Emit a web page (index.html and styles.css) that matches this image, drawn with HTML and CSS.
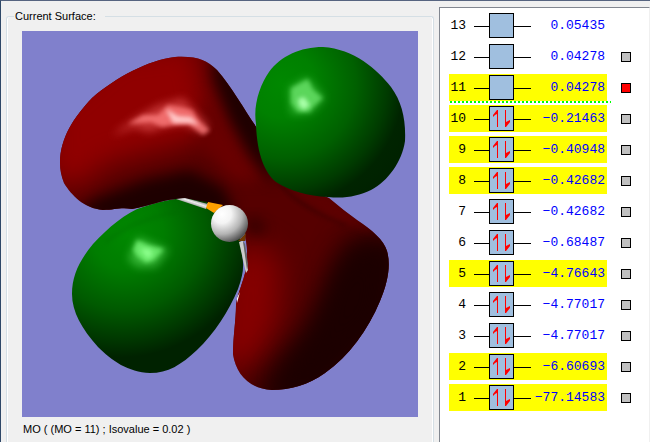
FILE: index.html
```html
<!DOCTYPE html>
<html lang="en">
<head>
<meta charset="utf-8">
<title>Molecular orbitals</title>
<link rel="stylesheet" href="styles.css">
</head>
<body>
<main class="window">
  <fieldset class="surface">
    <legend>Current Surface:</legend>
    <svg class="view" viewBox="22 31 396 386" role="img" aria-label="Orbital surface">
      <defs>
        <radialGradient id="g1" gradientUnits="userSpaceOnUse" cx="282" cy="84" r="135">
          <stop offset="0" stop-color="#008800"/><stop offset=".25" stop-color="#008000"/><stop offset=".55" stop-color="#006000"/><stop offset=".78" stop-color="#003b00"/><stop offset=".9" stop-color="#002400"/><stop offset="1" stop-color="#002200"/>
        </radialGradient>
        <radialGradient id="g2" gradientUnits="userSpaceOnUse" cx="128" cy="235" r="145" gradientTransform="rotate(-25 128 235) scale(1 .93) translate(0 17)">
          <stop offset="0" stop-color="#008800"/><stop offset=".25" stop-color="#007d00"/><stop offset=".55" stop-color="#005a00"/><stop offset=".78" stop-color="#003600"/><stop offset=".9" stop-color="#002200"/>
        </radialGradient>
        <radialGradient id="ball" gradientUnits="userSpaceOnUse" cx="222" cy="214" r="31">
          <stop offset="0" stop-color="#fff"/><stop offset=".3" stop-color="#f4f4f4"/><stop offset=".65" stop-color="#b4b4b4"/><stop offset="1" stop-color="#444"/>
        </radialGradient>
        <linearGradient id="bond" gradientUnits="userSpaceOnUse" x1="193" y1="198" x2="190" y2="207">
          <stop offset="0" stop-color="#777"/><stop offset=".4" stop-color="#eee"/><stop offset="1" stop-color="#555"/>
        </linearGradient>
        <path id="red" d="M60 163C60 138 74 117 92 98C116 77 149 60 175 57C198 56 206 60 217 70C232 87 245 111 257 128L282 178L329 198Q343 210 357 220C372 230 384 240 387 251C391 265 388 282 380 301C368 330 349 356 325 373C308 385 290 390 272 390C249 389 236 374 233 354C233 337 236 320 236 305C238 292 243 283 246 269C248 255 246 241 244 230L228 209L204 202L190 199L176 199C162 200 149 206 132 209C120 207 115 210 103 210C84 208 72 196 64 183Q60 173 60 163Z"/>
        <clipPath id="redClip"><use href="#red"/></clipPath>
        <filter id="b16" x="-60%" y="-60%" width="220%" height="220%" color-interpolation-filters="sRGB"><feGaussianBlur stdDeviation="14"/></filter>
        <filter id="b8" x="-60%" y="-60%" width="220%" height="220%" color-interpolation-filters="sRGB"><feGaussianBlur stdDeviation="7"/></filter>
        <filter id="b3" x="-60%" y="-60%" width="220%" height="220%" color-interpolation-filters="sRGB"><feGaussianBlur stdDeviation="4"/></filter>
        <filter id="b2" x="-60%" y="-60%" width="220%" height="220%" color-interpolation-filters="sRGB"><feGaussianBlur stdDeviation="2"/></filter>
      </defs>
      <rect x="22" y="31" width="396" height="386" fill="#8080cc"/>
      <path fill="url(#g2)" d="M72 294C72 276 79 261 93 244C108 228 126 212 143 207C158 202 173 198 190 198L238 220L243 262Q244 273 238 289C229 311 214 334 197 350C181 365 168 373 150 373C128 372 112 361 98 347C82 329 72 312 72 294Z"/>
      <path d="M105 243Q127 222 177 212" fill="none" stroke="#006300" stroke-width="3" opacity=".3" filter="url(#b2)"/>
      <path filter="url(#b3)" fill="#80ff80" opacity=".4" d="M128 259L138 237L169 250L156 267L137 267Z"/>
      <path filter="url(#b2)" fill="#80ff80" opacity=".7" d="M133 250L137 240L148 245L164 249L154 260L146 263L137 256Z"/>
      <path filter="url(#b2)" fill="#8cff8c" d="M140 249L149 249L153 253L148 259Z"/>
      <use href="#red" fill="#560000"/>
      <g clip-path="url(#redClip)">
        <path filter="url(#b16)" fill="#900000" d="M45 185L50 105L115 50L196 40L208 100L218 128L180 145L105 165L85 185Z"/>
        <path filter="url(#b8)" fill="#690000" d="M203 95L225 112L262 180L232 180L200 145Z"/>
        <path filter="url(#b8)" fill="#1e0000" d="M214 53L240 84L262 118L275 186L250 154L230 119L213 76Z"/>
        <path filter="url(#b8)" fill="#1e0000" d="M72 217L94 199L145 180L190 170L223 187L236 212L150 220Z"/>
        <path filter="url(#b16)" fill="#850000" d="M225 270L250 240L280 260L278 320L257 362L215 370Z"/>
        <path filter="url(#b16)" fill="#1c0000" d="M350 235L410 235L395 330L320 405L250 410L262 380L305 330L325 290Z"/>
        <path filter="url(#b16)" fill="#1c0000" d="M340 260L385 245L375 320L310 380L275 385L320 325Z"/>
        <path filter="url(#b8)" fill="#210000" d="M246 219L258 218L268 231L257 235L247 230Z" opacity=".7"/>
        <path filter="url(#b2)" fill="none" stroke="#250000" stroke-width="2" opacity=".6" d="M278 182Q299 207 346 225"/>
        <path filter="url(#b3)" fill="#620000" opacity=".7" d="M287 186L329 198L375 232L331 217Z"/>
        <path filter="url(#b3)" fill="#e05050" opacity=".65" d="M111 136L135 118L158 105L183 98L209 126L202 133L183 124L164 127L149 132L134 127Z"/>
        <path filter="url(#b2)" fill="#ff8080" opacity=".75" d="M128 124L143 115L158 115L168 105L184 108L192 110L199 121L210 130L203 135L189 124L174 125L162 127L151 122Z"/>
        <path filter="url(#b2)" fill="#ffc8c8" d="M166 109L178 116L191 117L199 125L189 123L173 123Z"/>
      </g>
      <path fill="url(#g1)" d="M256 124C253 105 260 85 269 72C281 56 300 47 323 47C354 49 377 69 391 87C402 102 406 120 405 141C402 162 388 181 371 190C358 196 345 199 328 197C308 196 290 191 276 182C265 173 257 155 256 124Z"/>
      <path filter="url(#b3)" fill="#80ff80" opacity=".35" d="M289 88L307 77L325 98L311 113L291 114Z"/>
      <path filter="url(#b2)" fill="#70e870" opacity=".7" d="M291 88L308 79L313 90L323 98L313 107L310 112L298 112L291 103Z"/>
      <path filter="url(#b2)" fill="#a8ffa8" d="M298 99L304 97L310 105L304 110L299 106Z"/>
      <path fill="#004000" d="M188 199L207 202L207 206Z"/>
      <path fill="url(#bond)" d="M176 199L185 198L208 204L206 209Z"/>
      <path fill="#ffa000" d="M208 202L223 205L214 213L206 208Z"/>
      <path fill="#8080cc" d="M243 240L246 241L247 252L245 257Z"/>
      <path fill="#ccc" d="M239 242L243 241L248 270L246 273Z"/>
      <path fill="#666" d="M243 241L245 244L248 264L247 270Z"/>
      <path fill="#fff" d="M240 292L237 303L237 298Z"/>
      <path fill="#703800" d="M238 241L246 233L245 241Z"/>
      <circle cx="229.500" cy="223.500" r="18.500" fill="url(#ball)"/>
    </svg>
    <p class="caption">MO ( (MO = 11) ; Isovalue = 0.02 )</p>
  </fieldset>

  <section class="levels" aria-label="Orbital energies">
    <svg class="symbols" aria-hidden="true">
      <symbol id="empty" viewBox="0 0 57 25">
        <path d="M0 13.500H57" stroke="#000"/>
        <rect x="15.500" y=".5" width="24" height="24" fill="#a0bfdf" stroke="#000"/>
      </symbol>
      <symbol id="pair" viewBox="0 0 57 25">
        <path d="M0 13.500H57" stroke="#000"/>
        <rect x="15.500" y=".5" width="24" height="24" fill="#a0bfdf" stroke="#000"/>
        <path d="M23 4H24V21H23V8L21 9L19 11V9ZM31 4H32V16L34 15L36 14V16L32 21H31Z" fill="#f00"/>
      </symbol>
    </svg>
    <table>
      <tbody>
        <tr><th scope="row">13</th><td class="level"><svg><use href="#empty"/></svg></td><td class="energy">0.05435</td><td class="pick"></td></tr>
        <tr><th scope="row">12</th><td class="level"><svg><use href="#empty"/></svg></td><td class="energy">0.04278</td><td class="pick"><input type="checkbox" aria-label="Orbital 12"></td></tr>
        <tr class="marked lumo"><th scope="row">11</th><td class="level"><svg><use href="#empty"/></svg></td><td class="energy">0.04278</td><td class="pick"><input type="checkbox" aria-label="Orbital 11" checked></td></tr>
        <tr class="marked"><th scope="row">10</th><td class="level"><svg><use href="#pair"/></svg></td><td class="energy">−0.21463</td><td class="pick"><input type="checkbox" aria-label="Orbital 10"></td></tr>
        <tr class="marked"><th scope="row">9</th><td class="level"><svg><use href="#pair"/></svg></td><td class="energy">−0.40948</td><td class="pick"><input type="checkbox" aria-label="Orbital 9"></td></tr>
        <tr class="marked"><th scope="row">8</th><td class="level"><svg><use href="#pair"/></svg></td><td class="energy">−0.42682</td><td class="pick"><input type="checkbox" aria-label="Orbital 8"></td></tr>
        <tr><th scope="row">7</th><td class="level"><svg><use href="#pair"/></svg></td><td class="energy">−0.42682</td><td class="pick"><input type="checkbox" aria-label="Orbital 7"></td></tr>
        <tr><th scope="row">6</th><td class="level"><svg><use href="#pair"/></svg></td><td class="energy">−0.68487</td><td class="pick"><input type="checkbox" aria-label="Orbital 6"></td></tr>
        <tr class="marked"><th scope="row">5</th><td class="level"><svg><use href="#pair"/></svg></td><td class="energy">−4.76643</td><td class="pick"><input type="checkbox" aria-label="Orbital 5"></td></tr>
        <tr><th scope="row">4</th><td class="level"><svg><use href="#pair"/></svg></td><td class="energy">−4.77017</td><td class="pick"><input type="checkbox" aria-label="Orbital 4"></td></tr>
        <tr><th scope="row">3</th><td class="level"><svg><use href="#pair"/></svg></td><td class="energy">−4.77017</td><td class="pick"><input type="checkbox" aria-label="Orbital 3"></td></tr>
        <tr class="marked"><th scope="row">2</th><td class="level"><svg><use href="#pair"/></svg></td><td class="energy">−6.60693</td><td class="pick"><input type="checkbox" aria-label="Orbital 2"></td></tr>
        <tr class="marked"><th scope="row">1</th><td class="level"><svg><use href="#pair"/></svg></td><td class="energy">−77.14583</td><td class="pick"><input type="checkbox" aria-label="Orbital 1"></td></tr>
      </tbody>
    </table>
  </section>
</main>
</body>
</html>
```
FILE: styles.css
```css
* { box-sizing: border-box; }

body {
  margin: 0;
  background: #f0f0f0;
  font-family: "Liberation Sans", Arial, sans-serif;
  font-size: 11px;
  line-height: 14px;
  color: #000;
}

.window {
  display: flex;
  min-height: 100vh;
  border-top: 1px solid #566480;
  border-left: 1px solid #2f4868;
}

.surface {
  flex: 1;
  min-width: 0;
  margin: 8px 5px 0;
  padding: 8px 15px 0;
  border: 1px solid #d5dfe5;
  border-bottom: 0;
  border-radius: 3px 3px 0 0;
  box-shadow: inset 1px 0 #fff, inset -1px 0 #fff;
}

.surface legend {
  margin-left: -8px;
  padding: 0 9px 0 1px;
}

.view {
  display: block;
  width: 100%;
  height: auto;
}

.caption {
  margin: 5px 0 0 1px;
}

.levels {
  flex: 0 0 211px;
  margin-top: 6px;
  padding: 0 0 0 9px;
  background: #fff;
  border-top: 1px solid #828790;
  border-left: 1px solid #828790;
  border-right: 1px solid #f0f0f0;
}

.symbols {
  display: none;
}

table {
  border-collapse: separate;
  border-spacing: 0 4px;
  font: 13px/15px "Liberation Mono", "Courier New", monospace;
}

tr {
  position: relative;
  height: 27px;
}

th, td {
  padding: 0;
  font-weight: normal;
  text-align: right;
  vertical-align: middle;
}

th {
  width: 17px;
}

.level {
  width: 65px;
}

.level svg {
  display: block;
  width: 57px;
  height: 25px;
  margin-left: auto;
}

.energy {
  width: 76px;
  padding-right: 2px;
  color: #00f;
}

.marked th, .marked .level, .marked .energy {
  background: #ff0;
}

.lumo::after {
  content: "";
  position: absolute;
  left: 1px;
  top: 100%;
  width: 161px;
  height: 2px;
  background: repeating-linear-gradient(90deg, #0f0 0 2px, #fff 2px 4px);
}

.pick {
  width: 24px;
}

.pick input {
  appearance: none;
  display: block;
  width: 10px;
  height: 10px;
  margin: 0 0 0 auto;
  border: 1px solid #000;
  border-radius: 0;
  background: #c0c0c0;
}

.pick input:checked {
  background: #f00;
}
```
